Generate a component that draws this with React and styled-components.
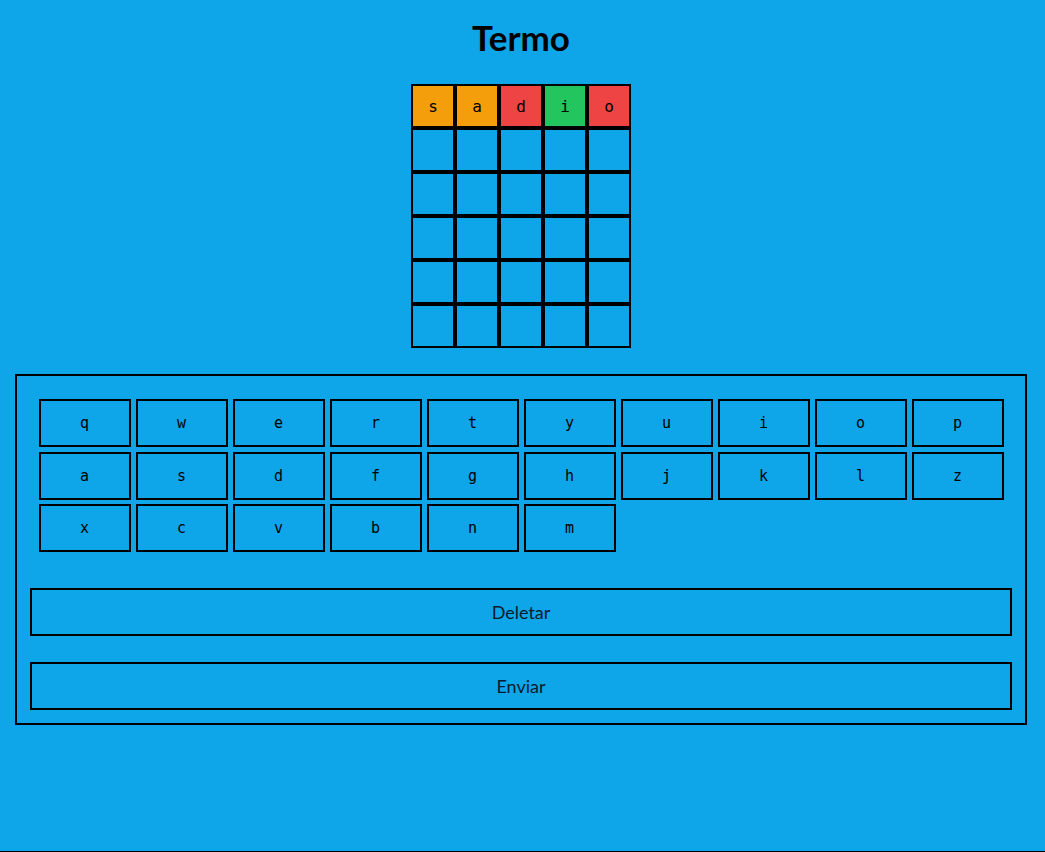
import React from "react";
import styled, { createGlobalStyle } from "styled-components";

const GlobalStyle = createGlobalStyle`
	html, body {
		margin: 0;
		padding: 0;
		background-color: #0ea5e9;
	}
	* {
		box-sizing: border-box;
	}
`;

const rows = [
	["s", "a", "d", "i", "o"],
	["", "", "", "", ""],
	["", "", "", "", ""],
	["", "", "", "", ""],
	["", "", "", "", ""],
	["", "", "", "", ""],
];

const states = [
	["present", "present", "absent", "correct", "absent"],
];

const keys = "qwertyuiopasdfghjklzxcvbnm".split("");

const tileColors = {
	present: "#f59e0b",
	absent: "#ef4444",
	correct: "#22c55e",
	empty: "transparent",
};

const Page = styled.div`
	min-height: 100vh;
	background-color: #0ea5e9;
	border-bottom: 1px solid #000;
	padding: 18px 3px 0 0;
	display: flex;
	flex-direction: column;
	align-items: center;
`;

const Title = styled.h1`
	margin: 0 0 27px 0;
	font-family: "Lato", "Inter", sans-serif;
	font-weight: 700;
	font-size: 35px;
	line-height: 39px;
	color: #000;
`;

const Board = styled.div`
	display: grid;
	grid-template-columns: repeat(5, 44px);
	grid-auto-rows: 44px;
	margin-bottom: 26px;
`;

const Tile = styled.div`
	border: 2px solid #000;
	background-color: ${(p) => tileColors[p.$state]};
	display: flex;
	align-items: center;
	justify-content: center;
	font-family: "DejaVu Sans Mono", "Liberation Mono", monospace;
	font-size: 16px;
	color: #000;
`;

const Keyboard = styled.div`
	align-self: stretch;
	margin: 0 15px;
	border: 2px solid #000;
	padding: 23px 13px 13px 13px;
	display: flex;
	flex-direction: column;
`;

const Keys = styled.div`
	display: grid;
	grid-template-columns: repeat(10, 92px);
	grid-auto-rows: 48px;
	column-gap: 5px;
	row-gap: 4.5px;
	justify-content: center;
	margin-bottom: 36px;
`;

const Key = styled.button`
	background: transparent;
	border: 2px solid #000;
	padding: 0;
	font-family: "DejaVu Sans Mono", "Liberation Mono", monospace;
	font-size: 15px;
	color: #000;
	cursor: pointer;
`;

const ActionButton = styled.button`
	height: 48px;
	width: 100%;
	background: transparent;
	border: 2px solid #000;
	font-family: "Lato", "Liberation Sans", sans-serif;
	font-weight: 400;
	font-size: 18px;
	color: #0a1a2a;
	cursor: pointer;
	& + & {
		margin-top: 26px;
	}
`;

function App() {
	return (
		<>
			<GlobalStyle />
			<Page>
				<Title>Termo</Title>
				<Board>
					{rows.map((row, r) =>
						row.map((letter, c) => (
							<Tile key={`${r}-${c}`} $state={states[r]?.[c] || "empty"}>
								{letter}
							</Tile>
						))
					)}
				</Board>
				<Keyboard>
					<Keys>
						{keys.map((k) => (
							<Key key={k}>{k}</Key>
						))}
					</Keys>
					<ActionButton>Deletar</ActionButton>
					<ActionButton>Enviar</ActionButton>
				</Keyboard>
			</Page>
		</>
	);
}

export default App;
